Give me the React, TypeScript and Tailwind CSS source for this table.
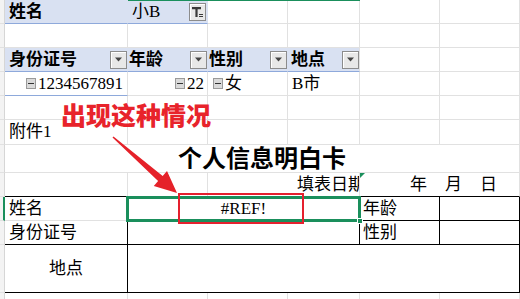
import type { ReactNode } from "react";

type CellProps = {
  className?: string;
  r?: string;
  b?: string;
  children?: ReactNode;
};

function Cell({
  className = "",
  r = "border-r-[#e1e1e1]",
  b = "border-b-[#e1e1e1]",
  children,
}: CellProps) {
  return (
    <div className={`flex items-center overflow-hidden whitespace-nowrap border-r border-b ${r} ${b} ${className}`}>
      {children}
    </div>
  );
}

function Strip({ active = false }: { active?: boolean }) {
  return (
    <div
      className={`border-b border-b-[#e1e1e1] bg-[#f3f3f3] ${
        active ? "border-r-2 border-r-[#1a8f5c]" : "border-r border-r-[#d6d6d6]"
      }`}
    />
  );
}

function DropBtn() {
  return (
    <span className="flex h-[18px] w-[17px] shrink-0 items-center justify-center border border-[#8c8c8c] bg-[#e8e8e8] shadow-[inset_1px_1px_0_#ffffff]">
      <svg width="9" height="5" viewBox="0 0 9 5">
        <path d="M1 0.5h7L4.5 4.5z" fill="#444" />
      </svg>
    </span>
  );
}

function FilterBtn() {
  return (
    <span className="flex h-[18px] w-[17px] shrink-0 items-center justify-center border border-[#8c8c8c] bg-[#e8e8e8] shadow-[inset_1px_1px_0_#ffffff]">
      <svg width="13" height="12" viewBox="0 0 13 12">
        <path d="M1 1h9v2.2H6.6V11H4.4V3.2H1z" fill="#3a3a3a" />
        <rect x="8" y="8" width="4" height="1" fill="#3a3a3a" />
        <rect x="8" y="10" width="4" height="1" fill="#3a3a3a" />
      </svg>
    </span>
  );
}

function Fold() {
  return (
    <span className="mr-[2px] flex h-[11px] w-[10px] shrink-0 items-center justify-center border border-[#9a9a9a] bg-[#dadada]">
      <span className="h-px w-[6px] bg-[#333]" />
    </span>
  );
}

const hb = "border-b-[#8ea9db]";
const hr = "border-r-[#d9e1f2]";
const k = "border-r-black";
const kb = "border-b-black";

export default function App() {
  return (
    <div className="relative h-[299px] w-[520px] overflow-hidden bg-white font-['Liberation_Serif','Noto_Sans_CJK_SC',serif] text-[17px] text-black">
      <div className="grid grid-cols-[5px_123px_80px_80px_72px_80px_80px] grid-rows-[24px_24px_24px_24px_24px_25px_28px_24px_24px_24px_48px_24px]">
        {/* row 1 */}
        <Strip />
        <Cell className="bg-[#d9e1f2] pl-[4px] font-bold" r={hr} b={hb}>姓名</Cell>
        <Cell className="justify-between bg-[#d9e1f2] pl-[4px] pr-px" r={hr} b={hb}>
          小B
          <FilterBtn />
        </Cell>
        <Cell /><Cell /><Cell /><Cell />

        {/* row 2 */}
        <Strip />
        <Cell /><Cell /><Cell /><Cell /><Cell /><Cell />

        {/* row 3 */}
        <Strip />
        <Cell className="justify-between bg-[#d9e1f2] pl-[4px] font-bold" r={hr} b={hb}>
          身份证号
          <DropBtn />
        </Cell>
        <Cell className="justify-between bg-[#d9e1f2] pl-px font-bold" r={hr} b={hb}>
          年龄
          <DropBtn />
        </Cell>
        <Cell className="justify-between bg-[#d9e1f2] pl-px font-bold" r={hr} b={hb}>
          性别
          <DropBtn />
        </Cell>
        <Cell className="justify-between bg-[#d9e1f2] pl-[3px] font-bold" r="border-r-[#e1e1e1]" b={hb}>
          地点
          <DropBtn />
        </Cell>
        <Cell /><Cell />

        {/* row 4 */}
        <Strip />
        <Cell className="justify-end pr-[4px]" b={hb}>
          <Fold />
          1234567891
        </Cell>
        <Cell className="justify-end pr-[3px]">
          <Fold />
          22
        </Cell>
        <Cell className="pl-[5px]">
          <Fold />女
        </Cell>
        <Cell className="pl-[4px]">B市</Cell>
        <Cell /><Cell />

        {/* row 5 */}
        <Strip />
        <Cell /><Cell /><Cell /><Cell /><Cell /><Cell />

        {/* row 6 */}
        <Strip />
        <Cell className="pl-[4px]">附件1</Cell>
        <Cell /><Cell /><Cell /><Cell /><Cell />

        {/* row 7 */}
        <Strip />
        <Cell className="col-span-6 items-end justify-center pb-px text-[24px] leading-none font-bold">
          个人信息明白卡
        </Cell>

        {/* row 8 */}
        <Strip />
        <Cell b={kb} />
        <Cell b={kb} />
        <Cell className="col-span-2 justify-end" b={kb}>
          <span className="mr-[-6px]">填表日期</span>
        </Cell>
        <Cell className="col-span-2 gap-[18px] pl-[50px]" b={kb}>
          <span>年</span>
          <span>月</span>
          <span>日</span>
        </Cell>

        {/* row 9 */}
        <Strip active />
        <Cell className="pl-[4px]" r={k}>姓名</Cell>
        <Cell className="col-span-3 justify-center" r={k} b={kb}>#REF!</Cell>
        <Cell className="pl-[3px]" r={k} b={kb}>年龄</Cell>
        <Cell r={k} b={kb} />

        {/* row 10 */}
        <Strip />
        <Cell className="pl-[4px]" r={k} b={kb}>身份证号</Cell>
        <Cell className="col-span-3" r={k} b={kb} />
        <Cell className="pl-[3px]" r={k} b={kb}>性别</Cell>
        <Cell r={k} b={kb} />

        {/* row 11 */}
        <Strip />
        <Cell className="justify-center" r={k} b={kb}>地点</Cell>
        <Cell className="col-span-5" r={k} b={kb} />

        {/* row 12 */}
        <Strip />
        <Cell /><Cell /><Cell /><Cell /><Cell /><Cell />
      </div>

      {/* column header selection hint */}
      <div className="absolute left-[128px] top-0 h-px w-[232px] bg-[#1a8f5c]" />

      {/* error indicator */}
      <div className="absolute left-[360px] top-[173px] h-0 w-0 border-t-[5px] border-r-[5px] border-t-[#1a8f5c] border-r-transparent" />

      {/* active cell */}
      <div className="absolute left-[126px] top-[196px] h-[26px] w-[235px] border-[3px] border-[#1a8f5c]" />
      <div className="absolute left-[357px] top-[218px] h-[6px] w-[6px] border border-white bg-[#1a8f5c]" />

      {/* annotation */}
      <div className="absolute left-[61px] top-[102px] font-['Noto_Sans_CJK_SC',sans-serif] text-[25px] leading-none font-black text-[#e8232b]">
        出现这种情况
      </div>
      <div className="absolute left-[178px] top-[193px] h-[31px] w-[126px] border-2 border-[#e5202e]" />
      <svg className="pointer-events-none absolute left-0 top-0" width="520" height="299" viewBox="0 0 520 299">
        <polygon
          points="112.5,137.6 158.1,181.1 153.8,186 177,193 167,171 162.7,175.9 113.5,136.4"
          fill="#e52129"
        />
      </svg>
    </div>
  );
}
